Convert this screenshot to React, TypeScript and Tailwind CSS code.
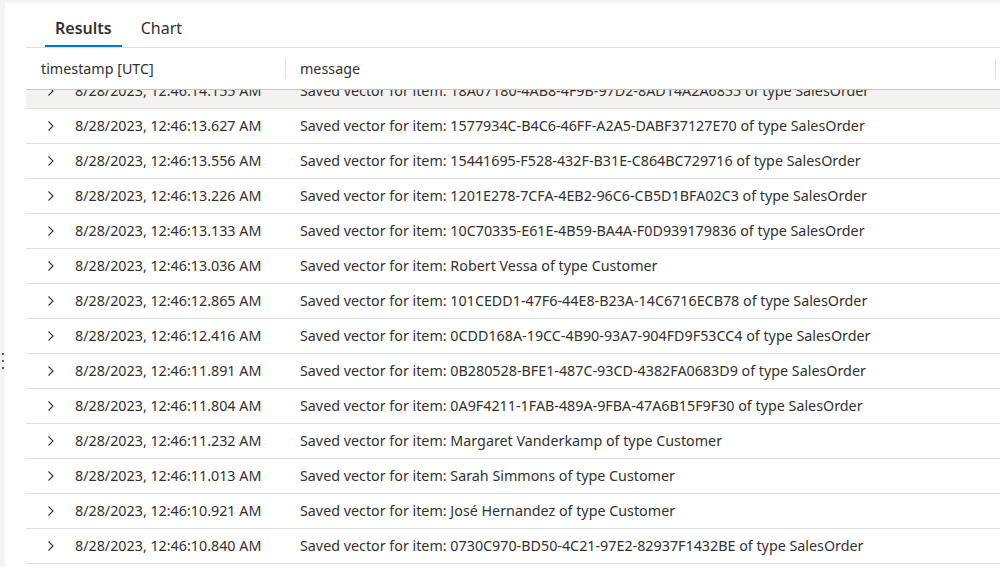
const ROWS: [string, string][] = [
  ['8/28/2023, 12:46:14.155 AM', 'Saved vector for item: 18A07180-4AB8-4F9B-97D2-8AD14A2A6855 of type SalesOrder'],
  ['8/28/2023, 12:46:13.627 AM', 'Saved vector for item: 1577934C-B4C6-46FF-A2A5-DABF37127E70 of type SalesOrder'],
  ['8/28/2023, 12:46:13.556 AM', 'Saved vector for item: 15441695-F528-432F-B31E-C864BC729716 of type SalesOrder'],
  ['8/28/2023, 12:46:13.226 AM', 'Saved vector for item: 1201E278-7CFA-4EB2-96C6-CB5D1BFA02C3 of type SalesOrder'],
  ['8/28/2023, 12:46:13.133 AM', 'Saved vector for item: 10C70335-E61E-4B59-BA4A-F0D939179836 of type SalesOrder'],
  ['8/28/2023, 12:46:13.036 AM', 'Saved vector for item: Robert Vessa of type Customer'],
  ['8/28/2023, 12:46:12.865 AM', 'Saved vector for item: 101CEDD1-47F6-44E8-B23A-14C6716ECB78 of type SalesOrder'],
  ['8/28/2023, 12:46:12.416 AM', 'Saved vector for item: 0CDD168A-19CC-4B90-93A7-904FD9F53CC4 of type SalesOrder'],
  ['8/28/2023, 12:46:11.891 AM', 'Saved vector for item: 0B280528-BFE1-487C-93CD-4382FA0683D9 of type SalesOrder'],
  ['8/28/2023, 12:46:11.804 AM', 'Saved vector for item: 0A9F4211-1FAB-489A-9FBA-47A6B15F9F30 of type SalesOrder'],
  ['8/28/2023, 12:46:11.232 AM', 'Saved vector for item: Margaret Vanderkamp of type Customer'],
  ['8/28/2023, 12:46:11.013 AM', 'Saved vector for item: Sarah Simmons of type Customer'],
  ['8/28/2023, 12:46:10.921 AM', 'Saved vector for item: José Hernandez of type Customer'],
  ['8/28/2023, 12:46:10.840 AM', 'Saved vector for item: 0730C970-BD50-4C21-97E2-82937F1432BE of type SalesOrder'],
];

function Chevron() {
  return (
    <svg width="12" height="12" viewBox="0 0 12 12" fill="none">
      <path d="M3.5 1.5 L8 6 L3.5 10.5" stroke="#323130" strokeWidth="1.1" />
    </svg>
  );
}

export default function App() {
  return (
    <div
      className="w-[1000px] h-[567px] bg-[#f3f3f3] pt-[3px] pl-[5px] overflow-hidden text-[#323130]"
      style={{ fontFamily: '"Noto Sans", "Open Sans", sans-serif' }}
    >
      <div className="relative h-full bg-white pl-[21px]">
        {/* drag handle */}
        <div className="absolute -left-[3px] top-[350px] flex flex-col gap-[5px]">
          <span className="w-[2px] h-[2px] bg-[#605e5c]" />
          <span className="w-[2px] h-[2px] bg-[#605e5c]" />
          <span className="w-[2px] h-[2px] bg-[#605e5c]" />
        </div>

        {/* tabs */}
        <div className="flex h-[45px] border-b border-[#e1dfdd] pl-[19px]">
          <div className="relative flex items-center pt-[6px] px-[10px] text-[16px] font-semibold">
            Results
            <span className="absolute left-0 right-0 bottom-0 h-[2px] bg-[#0078d4]" />
          </div>
          <div className="flex items-center pt-[6px] px-[10px] ml-[9px] text-[16px] text-[#323130]">Chart</div>
        </div>

        {/* header */}
        <div className="flex h-[42px] items-center border-b border-[#c8c6c4] text-[14.3px] relative z-10 bg-white">
          <div className="w-[259px] pl-[15px] flex items-center h-full">timestamp [UTC]</div>
          <div className="w-px h-[20px] bg-[#e1dfdd]" />
          <div className="flex-1 pl-[14px]">message</div>
          <div className="w-px h-[20px] bg-[#e1dfdd] mr-[4px]" />
        </div>

        {/* rows */}
        <div className="h-[476px] overflow-hidden">
          <div className="-mt-[16px]">
            {ROWS.map(([ts, msg], i) => (
              <div
                key={i}
                className={`flex items-center h-[35px] border-b border-[#e1dfdd] text-[14.3px] whitespace-nowrap ${
                  i === 0 ? 'bg-[#f3f2f1]' : 'bg-white'
                }`}
              >
                <div className="w-[20px] ml-[19px] flex items-center">
                  <Chevron />
                </div>
                <div className="w-[225px] pl-[10px]">{ts}</div>
                <div className="pl-[10px]">{msg}</div>
              </div>
            ))}
          </div>
        </div>
      </div>
    </div>
  );
}
